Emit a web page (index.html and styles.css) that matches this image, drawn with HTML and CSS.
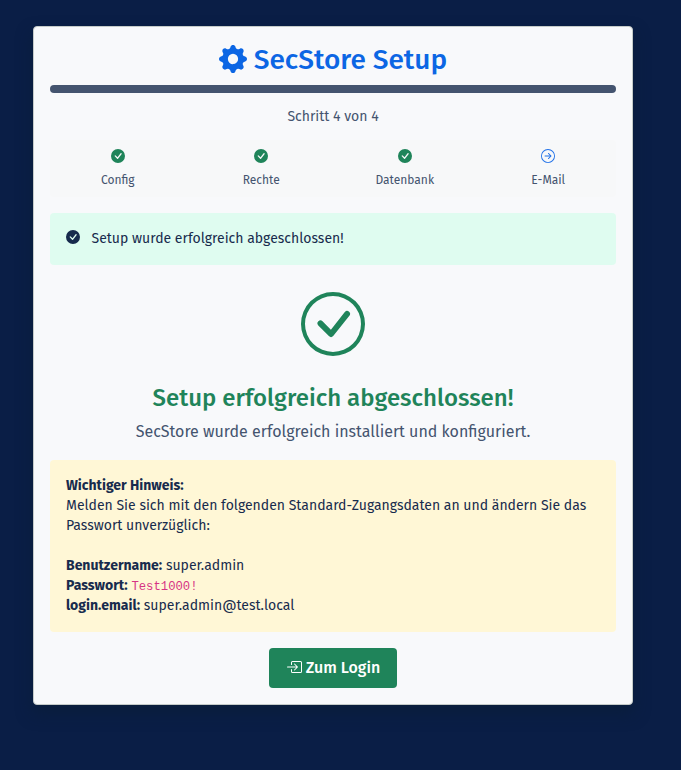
FILE: index.html
```html
<!DOCTYPE html>
<html lang="de">
<head>
<meta charset="utf-8">
<title>SecStore Setup</title>
<link rel="stylesheet" href="styles.css">
</head>
<body>
<svg class="sprite" aria-hidden="true">
  <symbol id="check-fill" viewBox="0 0 16 16"><path d="M16 8A8 8 0 1 1 0 8a8 8 0 0 1 16 0m-3.97-3.03a.75.75 0 0 0-1.08.022L7.477 9.417 5.384 7.323a.75.75 0 0 0-1.06 1.06L6.97 11.03a.75.75 0 0 0 1.079-.02l3.992-4.99a.75.75 0 0 0-.01-1.05z"/></symbol>
</svg>
<main class="card">
  <h1 class="title">
    <svg class="gear" viewBox="0 0 16 16"><path d="M9.405 1.05c-.413-1.4-2.397-1.4-2.81 0l-.1.34a1.464 1.464 0 0 1-2.105.872l-.31-.17c-1.283-.698-2.686.705-1.987 1.987l.169.311c.446.82.023 1.841-.872 2.105l-.34.1c-1.4.413-1.4 2.397 0 2.81l.34.1a1.464 1.464 0 0 1 .872 2.105l-.17.31c-.698 1.283.705 2.686 1.987 1.987l.311-.169a1.464 1.464 0 0 1 2.105.872l.1.34c.413 1.4 2.397 1.4 2.81 0l.1-.34a1.464 1.464 0 0 1 2.105-.872l.31.17c1.283.698 2.686-.705 1.987-1.987l-.169-.311a1.464 1.464 0 0 1 .872-2.105l.34-.1c1.4-.413 1.4-2.397 0-2.81l-.34-.1a1.464 1.464 0 0 1-.872-2.105l.17-.31c.698-1.283-.705-2.686-1.987-1.987l-.311.169a1.464 1.464 0 0 1-2.105-.872zM8 10.93a2.929 2.929 0 1 1 0-5.86 2.929 2.929 0 0 1 0 5.858z"/></svg>
    <span class="title-text">SecStore Setup</span>
  </h1>
  <div class="progress"></div>
  <p class="step-count"><span>Schritt 4 von 4</span></p>
  <div class="steps">
    <div class="step"><svg class="icon"><use href="#check-fill"/></svg><span>Config</span></div>
    <div class="step"><svg class="icon"><use href="#check-fill"/></svg><span>Rechte</span></div>
    <div class="step"><svg class="icon"><use href="#check-fill"/></svg><span>Datenbank</span></div>
    <div class="step current"><svg class="icon" viewBox="0 0 16 16"><path d="M1 8a7 7 0 1 0 14 0A7 7 0 0 0 1 8m15 0A8 8 0 1 1 0 8a8 8 0 0 1 16 0M4.5 7.5a.5.5 0 0 0 0 1h5.793l-2.147 2.146a.5.5 0 0 0 .708.708l3-3a.5.5 0 0 0 0-.708l-3-3a.5.5 0 1 0-.708.708L10.293 7.5z"/></svg><span>E-Mail</span></div>
  </div>
  <div class="alert success"><svg class="icon"><use href="#check-fill"/></svg><span>Setup wurde erfolgreich abgeschlossen!</span></div>
  <svg class="big-check" viewBox="0 0 16 16"><path d="M8 15A7 7 0 1 1 8 1a7 7 0 0 1 0 14m0 1A8 8 0 1 0 8 0a8 8 0 0 0 0 16"/><path d="m10.97 4.97-.02.022-3.473 4.425-2.093-2.094a.75.75 0 0 0-1.06 1.06L6.97 11.03a.75.75 0 0 0 1.079-.02l3.992-4.99a.75.75 0 0 0-1.071-1.05"/></svg>
  <h2 class="done"><span>Setup erfolgreich abgeschlossen!</span></h2>
  <p class="lead"><span>SecStore wurde erfolgreich installiert und konfiguriert.</span></p>
  <div class="alert warning">
    <strong>Wichtiger Hinweis:</strong><br>
    <span class="note">Melden Sie sich mit den folgenden Standard-Zugangsdaten an und ändern Sie das<br>Passwort unverzüglich:</span><br><br>
    <strong>Benutzername:</strong> super.admin<br>
    <strong>Passwort:</strong> <code>Test1000!</code><br>
    <strong>login.email:</strong> super.admin@test.local
  </div>
  <a class="button"><svg class="login" viewBox="0 0 16 16"><path d="M6 3.5a.5.5 0 0 1 .5-.5h8a.5.5 0 0 1 .5.5v9a.5.5 0 0 1-.5.5h-8a.5.5 0 0 1-.5-.5v-2a.5.5 0 0 0-1 0v2A1.5 1.5 0 0 0 6.5 14h8a1.5 1.5 0 0 0 1.5-1.5v-9A1.5 1.5 0 0 0 14.5 2h-8A1.5 1.5 0 0 0 5 3.5v2a.5.5 0 0 0 1 0z"/><path d="M11.854 8.354a.5.5 0 0 0 0-.708l-3-3a.5.5 0 1 0-.708.708L10.293 7.5H1.5a.5.5 0 0 0 0 1h8.793l-2.147 2.146a.5.5 0 0 0 .708.708z"/></svg><span>Zum Login</span></a>
</main>
</body>
</html>
```
FILE: styles.css
```css
* { box-sizing: border-box; }
body {
  margin: 0;
  padding: 26px 48px 0 33px;
  min-height: 770px;
  background: #0a1e46;
  color: #172b4d;
  font: 14px/20px "Fira Sans", "Noto Sans", sans-serif;
}
svg { fill: currentColor; flex: none; }
h1, h2, p { margin: 0; }
.sprite { display: none; }
.card {
  display: flex;
  flex-direction: column;
  width: 600px;
  height: 679px;
  padding: 16px;
  border: 1px solid #c5cbc9;
  border-radius: 4px;
  background: #f8f9fb;
  box-shadow: 0 8px 16px rgba(9, 30, 50, .5);
}
.title {
  display: flex;
  justify-content: center;
  align-items: center;
  gap: 7px;
  height: 34px;
  margin-bottom: 8px;
  color: #0c66e4;
  font-size: 28px;
  font-weight: 500;
  line-height: 34px;
}
.gear { width: 28px; height: 28px; margin-bottom: 2px; }
.progress { height: 8px; border-radius: 4px; background: #44546f; }
.step-count { margin: 14px 0 13px; text-align: center; color: #44546f; }
.steps {
  display: flex;
  justify-content: space-between;
  height: 57px;
  padding: 8px 0;
  border-radius: 4px;
  background: #f7f8f9;
}
.step {
  display: flex;
  flex-direction: column;
  align-items: center;
  width: 135.5px;
  gap: 7px;
  padding-top: 1px;
  color: #44546f;
  font-size: 12px;
  line-height: 20px;
}
.icon { width: 14px; height: 14px; }
.step .icon { color: #1f845a; }
.step.current .icon { color: #1d6fe8; }
.alert { padding: 16px; border-radius: 4px; }
.success {
  display: flex;
  gap: 11.5px;
  height: 52px;
  margin-top: 16px;
  background: #dffcf0;
}
.success .icon { margin-top: 1px; }
.big-check { align-self: center; width: 64px; height: 64px; margin: 27px 0 28px; color: #1f845a; }
.done { color: #1f845a; font-size: 24px; font-weight: 500; line-height: 29px; text-align: center; }
.lead { margin: 7px 0 16px; color: #44546f; font-size: 16px; line-height: 24px; text-align: center; }
.warning { height: 172px; margin-bottom: 16px; background: #fff7d6; white-space: nowrap; }
.warning strong { font-weight: 700; }
code { color: #d63384; font: 12.25px/12px "Liberation Mono", monospace; }
.button {
  display: flex;
  align-items: center;
  align-self: center;
  justify-content: center;
  gap: 4px;
  width: 128px;
  height: 40px;
  border-radius: 4px;
  background: #1f845a;
  color: #fff;
  font-size: 16px;
  font-weight: 500;
}
.login { width: 16px; height: 16px; margin-bottom: 2px; }
```
